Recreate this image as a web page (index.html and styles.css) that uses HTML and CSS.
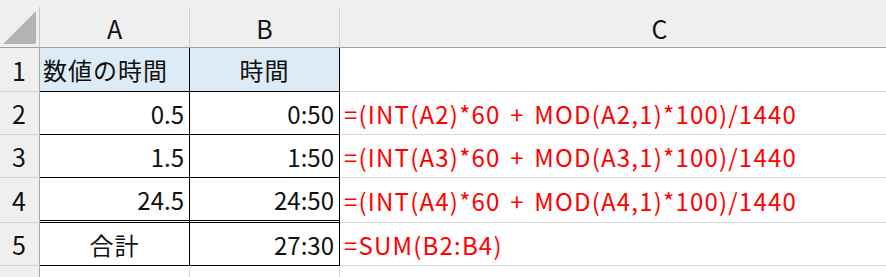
FILE: index.html
```html
<!DOCTYPE html>
<html lang="ja">
<head>
<meta charset="utf-8">
<link rel="stylesheet" href="styles.css">
</head>
<body>
<div class="sheet">
  <div class="corner"><span class="tri"></span></div>
  <div class="colhead">A</div>
  <div class="colhead">B</div>
  <div class="colhead last">C</div>

  <div class="rowhead">1</div>
  <div class="cell blue left bk jp">数値の時間</div>
  <div class="cell blue center bk jp">時間</div>
  <div class="cell grid"></div>

  <div class="rowhead">2</div>
  <div class="cell right bk">0.5</div>
  <div class="cell right bk">0:50</div>
  <div class="cell grid formula">=(INT(A2)*60 + MOD(A2,1)*100)/1440</div>

  <div class="rowhead">3</div>
  <div class="cell right bk">1.5</div>
  <div class="cell right bk">1:50</div>
  <div class="cell grid formula">=(INT(A3)*60 + MOD(A3,1)*100)/1440</div>

  <div class="rowhead">4</div>
  <div class="cell right bk dbl">24.5</div>
  <div class="cell right bk dbl">24:50</div>
  <div class="cell grid formula">=(INT(A4)*60 + MOD(A4,1)*100)/1440</div>

  <div class="rowhead">5</div>
  <div class="cell center bk jp">合計</div>
  <div class="cell right bk">27:30</div>
  <div class="cell grid formula">=SUM(B2:B4)</div>

  <div class="rowhead">6</div>
  <div class="cell grid"></div>
  <div class="cell grid"></div>
  <div class="cell grid"></div>
</div>
</body>
</html>
```

FILE: styles.css
```css
html, body {
  margin: 0;
  padding: 0;
  background: #efefef;
  overflow: hidden;
}
body {
  padding-top: 7px;
  font-family: "Noto Sans CJK JP", "Noto Sans", sans-serif;
  color: #111;
}
.sheet {
  display: grid;
  grid-template-columns: 40px 150px 150px 640px;
  grid-template-rows: 41px 44px 43px 43px 45px 43px 40px;
  width: 980px;
  background: #fff;
}
.corner, .colhead {
  background: #efefef;
  border-bottom: 1px solid #9f9f9f;
  border-right: 1px solid #cfcfcf;
  box-sizing: border-box;
}
.corner {
  position: relative;
  border-right-color: #c6c6c6;
}
.tri {
  position: absolute;
  left: 3px;
  top: 4px;
  width: 33px;
  height: 33px;
  background: #b4b4b4;
  clip-path: polygon(100% 0, 100% 100%, 0 100%);
}
.colhead {
  display: flex;
  align-items: center;
  justify-content: center;
  font-size: 25px;
  padding-top: 2px;
}
.rowhead {
  background: #efefef;
  border-right: 1px solid #a8a8a8;
  border-bottom: 1px solid #d4d4d4;
  box-sizing: border-box;
  display: flex;
  align-items: center;
  justify-content: center;
  font-size: 25px;
  padding-right: 1px;
}
.cell {
  box-sizing: border-box;
  display: flex;
  align-items: center;
  font-size: 24px;
  white-space: nowrap;
}
.jp {
  letter-spacing: 1px;
}
.grid {
  border-bottom: 1px solid #dadada;
  border-right: 1px solid #dadada;
}
.bk {
  border-right: 1px solid #000;
  border-bottom: 1px solid #000;
}
.dbl {
  border-bottom: 3px double #000;
}
.blue {
  background: #ddebf7;
}
.left {
  justify-content: flex-start;
  padding-left: 3px;
}
.center {
  justify-content: center;
}
.right {
  justify-content: flex-end;
  padding-right: 5px;
}
.formula {
  color: #ff0000;
  padding-left: 4px;
  letter-spacing: 1.2px;
  word-spacing: 3px;
}
```
